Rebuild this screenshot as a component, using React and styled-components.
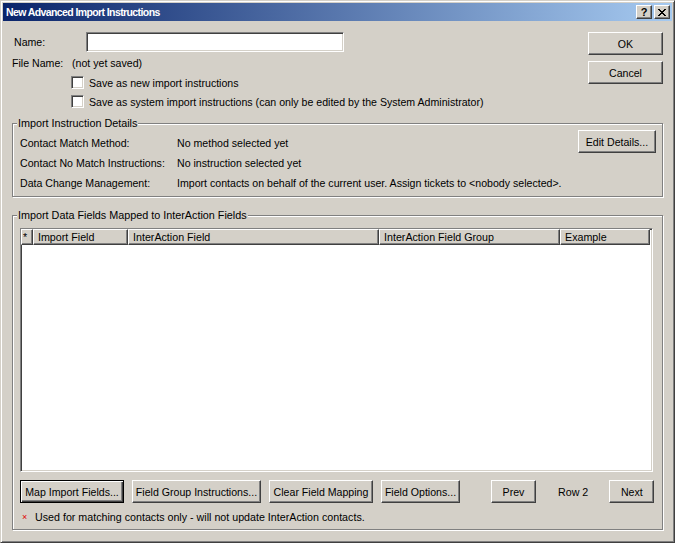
import styled, { createGlobalStyle, css } from 'styled-components';

const Global = createGlobalStyle`
  html, body { margin: 0; padding: 0; background: #d4d0c8; }
  body { font-family: "Liberation Sans", Arial, sans-serif; font-size: 10.6px; color: #000; }
  * { box-sizing: border-box; }
`;

const raised = css`
  border: 1px solid;
  border-color: #fff #404040 #404040 #fff;
  box-shadow: inset -1px -1px #808080, inset 1px 1px #d4d0c8;
`;

const sunken = css`
  border: 1px solid;
  border-color: #808080 #fff #fff #808080;
  box-shadow: inset 1px 1px #404040, inset -1px -1px #d4d0c8;
`;

const Window = styled.div`
  width: 675px;
  height: 543px;
  display: flex;
  flex-direction: column;
  background: #d4d0c8;
  border: 1px solid;
  border-color: #d4d0c8 #404040 #404040 #d4d0c8;
  box-shadow: inset 1px 1px #fff, inset -1px -1px #808080;
  padding: 2px;
`;

const TitleBar = styled.div`
  height: 18px;
  display: flex;
  align-items: center;
  padding: 0 2px 0 3px;
  background: linear-gradient(to right, #0a246a, #a6caf0);
  color: #fff;
`;

const Title = styled.span`
  flex: 1;
  font-weight: bold;
  font-size: 10.5px;
  letter-spacing: -0.6px;
`;

const CaptionButton = styled.button`
  ${raised};
  width: 16px;
  height: 14px;
  padding: 0;
  margin-left: ${(p) => (p.$gap ? '2px' : '0')};
  background: #d4d0c8;
  font: bold 11px "Liberation Sans", Arial, sans-serif;
  line-height: 10px;
  color: #000;
  display: flex;
  align-items: center;
  justify-content: center;
`;

const Body = styled.div`
  flex: 1;
  display: flex;
  flex-direction: column;
  padding: 11px 9px 10px 9px;
`;

const Top = styled.div`
  display: flex;
  justify-content: space-between;
`;

const Form = styled.div`
  display: flex;
  flex-direction: column;
`;

const Row = styled.div`
  display: flex;
  align-items: center;
  height: ${(p) => p.$h || 19}px;
  padding-left: ${(p) => p.$indent || 0}px;
  white-space: nowrap;
`;

const Label = styled.span`
  width: ${(p) => p.$w}px;
  padding-left: ${(p) => p.$pad || 0}px;
  flex-shrink: 0;
`;

const TextInput = styled.div`
  ${sunken};
  width: 258px;
  height: 20px;
  background: #fff;
`;

const Check = styled.span`
  ${sunken};
  width: 13px;
  height: 13px;
  background: #fff;
  margin-right: 5px;
`;

const DialogButtons = styled.div`
  display: flex;
  flex-direction: column;
  gap: 6px;
`;

const Button = styled.button`
  ${raised};
  width: ${(p) => p.$w}px;
  height: 23px;
  padding: 0;
  background: #d4d0c8;
  color: #000;
  font: 10.6px "Liberation Sans", Arial, sans-serif;
  white-space: nowrap;
  flex-shrink: 0;
  ${(p) =>
    p.$default &&
    css`
      border: 1px solid #000;
      box-shadow: inset 1px 1px #fff, inset -1px -1px #404040, inset -2px -2px #808080;
    `}
`;

const Group = styled.div`
  position: relative;
  margin-top: ${(p) => p.$mt}px;
  border: 1px solid #808080;
  box-shadow: inset 1px 1px #fff, 1px 1px #fff;
  padding: ${(p) => p.$pad};
  display: flex;
  flex-direction: column;
  ${(p) => p.$grow && 'flex: 1;'}
`;

const Caption = styled.span`
  position: absolute;
  top: -7px;
  left: 4px;
  padding: 0 1px;
  background: #d4d0c8;
  font-size: 10.8px;
  line-height: 13px;
`;

const Details = styled.div`
  display: grid;
  grid-template-columns: 157px 1fr auto;
  grid-auto-rows: 20px;
  align-items: center;
  white-space: nowrap;
`;

const EditButton = styled(Button)`
  grid-column: 3;
  grid-row: 1;
  align-self: start;
  margin-top: -3px;
`;

const Table = styled.div`
  ${sunken};
  flex: 1;
  background: #fff;
`;

const Header = styled.div`
  display: flex;
  height: 16px;
`;

const HeadCell = styled.div`
  ${raised};
  width: ${(p) => p.$w}px;
  height: 16px;
  padding-left: ${(p) => (p.$narrow ? 1 : 4)}px;
  line-height: 14px;
  background: #d4d0c8;
  white-space: nowrap;
  overflow: hidden;
  font-size: 10.7px;
`;

const Actions = styled.div`
  display: flex;
  align-items: center;
  gap: 8px;
  margin-top: 8px;
`;

const RowLabel = styled.span`
  flex-shrink: 0;
  white-space: nowrap;
  margin: 0 13px 0 14px;
  font-size: 10.7px;
`;

const Note = styled.div`
  display: flex;
  align-items: center;
  height: 18px;
  margin-top: 5px;
  padding-left: 2px;
  white-space: nowrap;
  font-size: 10.7px;
`;

const Mark = styled.span`
  color: #e00000;
  font-size: 9px;
  width: 13px;
`;

// bitmap-style close glyph of the caption button
const CloseGlyph = () => (
  <svg width="8" height="7" viewBox="0 0 8 7" shapeRendering="crispEdges">
    <path
      d="M0 0h2v1H0zM6 0h2v1H6zM1 1h2v1H1zM5 1h2v1H5zM2 2h4v1H2zM3 3h2v1H3zM2 4h4v1H2zM1 5h2v1H1zM5 5h2v1H5zM0 6h2v1H0zM6 6h2v1H6z"
      fill="#000"
    />
  </svg>
);

export default function App() {
  return (
    <>
      <Global />
      <Window>
        <TitleBar>
          <Title>New Advanced Import Instructions</Title>
          <CaptionButton>?</CaptionButton>
          <CaptionButton $gap>
            <CloseGlyph />
          </CaptionButton>
        </TitleBar>
        <Body>
          <Top>
            <Form>
              <Row $h={20}>
                <Label $w={74} $pad={2}>Name:</Label>
                <TextInput />
              </Row>
              <Row $h={21}>
                <Label $w={60}>File Name:</Label>
                <span>(not yet saved)</span>
              </Row>
              <Row $indent={59}>
                <Check />
                Save as new import instructions
              </Row>
              <Row $indent={59}>
                <Check />
                Save as system import instructions (can only be edited by the System Administrator)
              </Row>
            </Form>
            <DialogButtons>
              <Button $w={75}>OK</Button>
              <Button $w={75}>Cancel</Button>
            </DialogButtons>
          </Top>

          <Group $mt={12} $pad="9px 6px 3px 7px">
            <Caption>Import Instruction Details</Caption>
            <Details>
              <span>Contact Match Method:</span>
              <span>No method selected yet</span>
              <EditButton $w={78}>Edit Details...</EditButton>
              <span>Contact No Match Instructions:</span>
              <span>No instruction selected yet</span>
              <span />
              <span>Data Change Management:</span>
              <span>Import contacts on behalf of the current user. Assign tickets to &lt;nobody selected&gt;.</span>
            </Details>
          </Group>

          <Group $mt={18} $grow $pad="12px 9px 3px 7px">
            <Caption>Import Data Fields Mapped to InterAction Fields</Caption>
            <Table>
              <Header>
                <HeadCell $w={12} $narrow>*</HeadCell>
                <HeadCell $w={95}>Import Field</HeadCell>
                <HeadCell $w={251}>InterAction Field</HeadCell>
                <HeadCell $w={181}>InterAction Field Group</HeadCell>
                <HeadCell $w={90}>Example</HeadCell>
              </Header>
            </Table>
            <Actions>
              <Button $w={104} $default>Map Import Fields...</Button>
              <Button $w={129}>Field Group Instructions...</Button>
              <Button $w={104}>Clear Field Mapping</Button>
              <Button $w={79}>Field Options...</Button>
              <Button $w={45} style={{ marginLeft: 23 }}>Prev</Button>
              <RowLabel>Row 2</RowLabel>
              <Button $w={45}>Next</Button>
            </Actions>
            <Note>
              <Mark>×</Mark>
              Used for matching contacts only - will not update InterAction contacts.
            </Note>
          </Group>
        </Body>
      </Window>
    </>
  );
}
